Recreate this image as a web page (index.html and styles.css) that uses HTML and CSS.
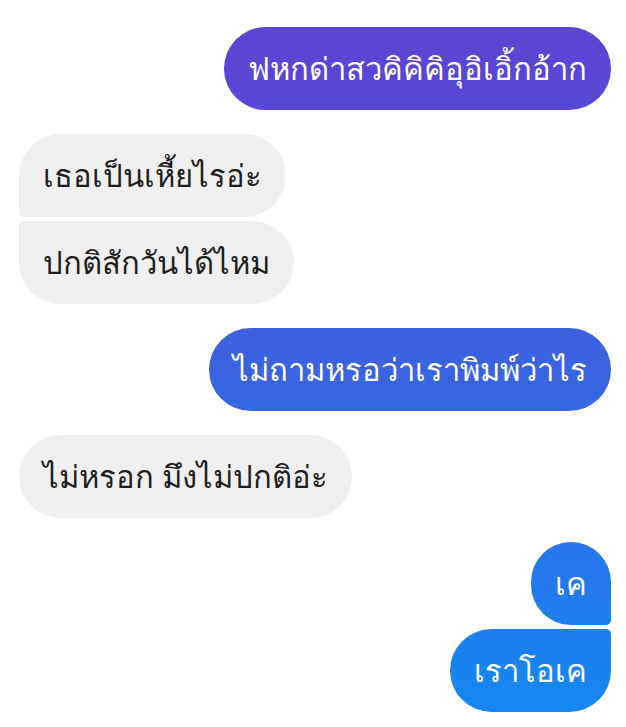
FILE: index.html
```html
<!DOCTYPE html>
<html lang="th">
<head>
    <meta charset="UTF-8">
    <meta name="viewport" content="width=device-width, initial-scale=1.0">
    <title>Chat</title>
    <link rel="stylesheet" href="styles.css">
</head>
<body>
    <div class="thread">
        <div class="group mine">
            <div class="bubble">ฟหกด่าสวคิคิคิอุอิเอิ้กอ้าก</div>
        </div>

        <div class="group theirs">
            <div class="bubble first">เธอเป็นเหี้ยไรอ่ะ</div>
            <div class="bubble last">ปกติสักวันได้ไหม</div>
        </div>

        <div class="group mine">
            <div class="bubble">ไม่ถามหรอว่าเราพิมพ์ว่าไร</div>
        </div>

        <div class="group theirs">
            <div class="bubble">ไม่หรอก มึงไม่ปกติอ่ะ</div>
        </div>

        <div class="group mine">
            <div class="bubble first">เค</div>
            <div class="bubble last">เราโอเค</div>
        </div>
    </div>
</body>
</html>
```

FILE: styles.css
```css
body {
    margin: 0;
    background-color: #fff;
    font-family: "Noto Sans", "DejaVu Sans", sans-serif;
}

.thread {
    display: flex;
    flex-direction: column;
    gap: 24px;
    padding: 27px 15px 0 19px;
}

.group {
    display: flex;
    flex-direction: column;
    gap: 4px;
}

.mine {
    align-items: flex-end;
}

.theirs {
    align-items: flex-start;
}

.bubble {
    font-size: 31px;
    line-height: 43px;
    height: 43px;
    padding: 20px 24px;
    border-radius: 42px;
    white-space: nowrap;
}

.mine .bubble {
    color: #fff;
    background-image: linear-gradient(to bottom, #5e43d2 0%, #5b45d3 9%, #3a63e0 51%, #2479ec 80%, #1984f0 92%, #1588f2 100%);
    background-attachment: fixed;
}

.theirs .bubble {
    color: #1e1e1e;
    background-color: #efefef;
}

.theirs .first {
    border-bottom-left-radius: 5px;
}

.theirs .last {
    border-top-left-radius: 5px;
}

.mine .first {
    border-bottom-right-radius: 5px;
}

.mine .last {
    border-top-right-radius: 5px;
}
```
